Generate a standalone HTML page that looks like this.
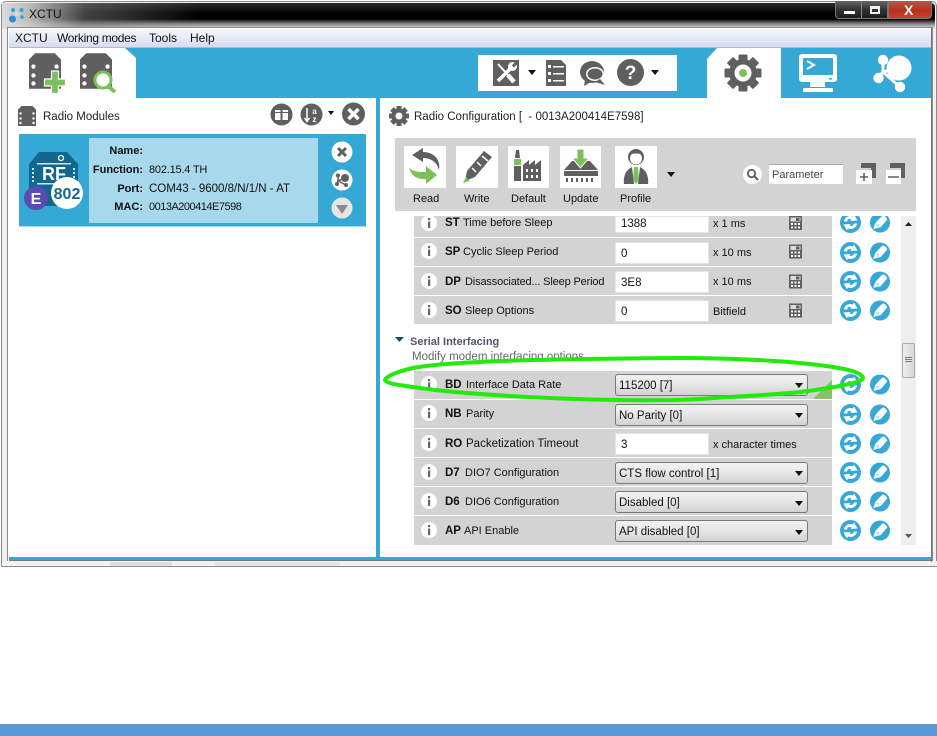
<!DOCTYPE html>
<html><head><meta charset="utf-8"><title>XCTU</title>
<style>
html,body{margin:0;padding:0;background:#fff}
#p{position:relative;width:937px;height:736px;overflow:hidden;background:#fff;font:11.5px "Liberation Sans",sans-serif;color:#111}
#p div,#p span,#p svg{position:absolute}
#p span{white-space:nowrap}
.row{left:414px;width:418px;height:28px;background:#d3d3d3}
#p span.t{line-height:14px;margin-top:1px}
#p span.m{margin-top:0}
#p span.l{font-size:11px}
.b{font-weight:bold}
.inp{left:615px;width:92px;height:20px;background:#fff;border:1px solid #e4e4e4;box-sizing:content-box;line-height:22px;text-indent:5px}
.sel{left:615px;width:191px;height:20px;border:1px solid #7a7a7a;border-radius:3px;background:linear-gradient(#f2f2f2,#e6e6e6 50%,#d2d2d2);line-height:22px;text-indent:3px}
.arr{width:0;height:0;border-left:4px solid transparent;border-right:4px solid transparent;border-top:5px solid #111}
</style></head><body>
<div id="p">
<svg width="0" height="0" style="left:0;top:0">
<defs>
<symbol id="mod" viewBox="0 0 36 40"><path d="M7 0H29L36 7V40H0V7Z" fill="#5f5f5f"/><g fill="#fff"><circle cx="5" cy="15" r="2.400"/><circle cx="5" cy="25" r="2.400"/><circle cx="5" cy="34" r="2.400"/><circle cx="31" cy="15" r="2.400"/><circle cx="31" cy="25" r="2.400"/><circle cx="31" cy="34" r="2.400"/></g></symbol>
<symbol id="ref" viewBox="0 0 21 21"><circle cx="10.500" cy="10.500" r="10.500" fill="#36a8d6"/><path d="M4 9.500C4.500 5 9 3 13 4.500L14 2.500 17.500 8.500 10.500 9 11.500 7.300C9 6.500 7.500 7.500 7 9.500ZM17 11.500C16.500 16 12 18 8 16.500L7 18.500 3.500 12.500 10.500 12 9.500 13.700C12 14.500 13.500 13.500 14 11.500Z" fill="#fff"/></symbol>
<symbol id="wr" viewBox="0 0 21 21"><circle cx="10.500" cy="10.500" r="10.500" fill="#36a8d6"/><path d="M13.500 3C15 3 18 5.500 18 7.500L11.500 15C10 16 7 16 3.500 17.500L5 12.500C6 10 10 6 13.500 3Z" fill="#fff"/><path d="M6.500 12.500L9 13 8 15" fill="none" stroke="#8fd0ea" stroke-width="1"/></symbol>
<symbol id="calc" viewBox="0 0 13 14"><path d="M0 0H13V14H0Z" fill="#5f5f5f"/><g fill="#fff"><rect x="1.500" y="1.500" width="10" height="4" fill="#ddd"/><rect x="7" y="2" width="3.500" height="3" fill="#5f5f5f"/><rect x="2" y="7" width="2" height="2"/><rect x="5.500" y="7" width="2" height="2"/><rect x="9" y="7" width="2" height="2"/><rect x="2" y="10.500" width="2" height="2"/><rect x="5.500" y="10.500" width="2" height="2"/><rect x="9" y="10.500" width="2" height="2"/></g></symbol>
<symbol id="info" viewBox="0 0 16 16"><circle cx="8" cy="8" r="8" fill="#fff"/><rect x="7" y="3" width="2.200" height="2.200" fill="#666"/><rect x="7" y="6.500" width="2.200" height="6.500" fill="#666"/></symbol>
</defs>
</svg>

<!-- window frame -->
<div style="left:1px;top:1px;width:936px;height:566px;background:#f0f0f0;border-radius:5px 5px 0 0;box-shadow:inset 0 0 0 1px #8a8a8a"></div>
<div style="left:2px;top:3px;width:933px;height:26px;background:linear-gradient(#2a2a2a,#000 40%,#000 62%,#777 78%,#eee 100%);border-radius:4px 4px 0 0"></div>
<div style="left:2px;top:3px;width:330px;height:26px;background:linear-gradient(90deg,rgba(225,225,225,.98) 0,rgba(205,205,205,.9) 8%,rgba(120,120,120,.55) 25%,rgba(0,0,0,0) 60%)"></div>
<svg style="left:9px;top:7px" width="16" height="16" viewBox="0 0 16 16"><circle cx="3.500" cy="12" r="3.500" fill="#2a8fd0"/><circle cx="12.500" cy="3" r="2" fill="#3aa0dc"/><circle cx="4" cy="3" r="2" fill="#3aa0dc"/><circle cx="13" cy="10" r="1.800" fill="#3aa0dc"/><circle cx="8" cy="7" r="2" fill="#ddd"/></svg>
<span class="t m" style="left:29px;top:7px;font-size:12px;color:#111">XCTU</span>
<!-- window controls -->
<div style="left:835px;top:1px;width:53px;height:18px;background:linear-gradient(#666,#333 50%,#1c1c1c);border:1px solid #777;border-top:0;border-radius:0 0 0 4px;box-sizing:border-box"></div>
<div style="left:888px;top:1px;width:44px;height:18px;background:linear-gradient(#b05a4a,#b8301c 55%,#c9432a);border:1px solid #777;border-top:0;border-radius:0 0 4px 0;box-sizing:border-box"></div>
<div style="left:861px;top:1px;width:1px;height:18px;background:#888"></div>
<div style="left:844px;top:11px;width:11px;height:3px;background:#fff"></div>
<div style="left:870px;top:6px;width:10px;height:8px;box-sizing:border-box;border:2px solid #eee;border-top-width:3px"></div>
<span class="b" style="left:904px;top:2px;font-size:14px;line-height:16px;color:#fff">X</span>

<!-- client -->
<div style="left:8px;top:28px;width:924px;height:533px;background:#fff;box-shadow:0 0 0 1px #8a8a8a"></div>
<div style="left:9px;top:29px;width:922px;height:18px;background:linear-gradient(#f5f7fc,#d6dcef);border-bottom:1px solid #b3b6cc"></div>
<span class="t m" style="left:15px;top:31px;font-size:12px">XCTU</span>
<span class="t m" style="left:57px;top:31px;font-size:12px;letter-spacing:-.3px">Working modes</span>
<span class="t m" style="left:149px;top:31px;font-size:12px">Tools</span>
<span class="t m" style="left:190px;top:31px;font-size:12px">Help</span>

<!-- blue toolbar -->
<div style="left:9px;top:48px;width:922px;height:50px;background:#36a8d6"></div>
<svg style="left:9px;top:48px" width="128" height="50"><path d="M0 0H116L127 10V50H0Z" fill="#fff"/></svg>
<svg style="left:29px;top:53px" width="37" height="41" viewBox="0 0 37 41"><use href="#mod" width="32" height="36"/><path d="M22.500 18H29.500V26H36.500V33H29.500V40.500H22.500V33H15.500V26H22.500Z" fill="#7cc05c" stroke="#fff" stroke-width="1.200"/></svg>
<svg style="left:80px;top:53px" width="38" height="40" viewBox="0 0 38 40"><use href="#mod" width="32" height="36"/><circle cx="23" cy="27" r="8" fill="#fff" stroke="#7cc05c" stroke-width="3"/><path d="M28 33L35 39" stroke="#7cc05c" stroke-width="4"/></svg>

<div style="left:478px;top:55px;width:199px;height:36px;background:#fff"></div>
<svg style="left:493px;top:60px" width="26" height="26" viewBox="0 0 26 26"><rect width="26" height="26" fill="#5f5f5f"/><path d="M5 4L15 15" stroke="#fff" stroke-width="2"/><path d="M15 15L21 22" stroke="#fff" stroke-width="4.500"/><path d="M18 8L5 21" stroke="#fff" stroke-width="3.500"/><circle cx="19.500" cy="6.500" r="4.500" fill="#fff"/><path d="M20 6.500L24 2" stroke="#5f5f5f" stroke-width="3"/></svg>
<div class="arr" style="left:528px;top:70px"></div>
<svg style="left:546px;top:60px" width="20" height="26" viewBox="0 0 20 26"><path d="M0 0H15L20 5V26H0Z" fill="#5f5f5f"/><g fill="#fff"><rect x="2" y="5" width="3" height="3"/><rect x="7" y="6" width="11" height="1.500"/><rect x="2" y="12" width="3" height="3"/><rect x="7" y="13" width="11" height="1.500"/><rect x="2" y="19" width="3" height="3"/><rect x="7" y="20" width="11" height="1.500"/></g></svg>
<svg style="left:580px;top:60px" width="27" height="27" viewBox="0 0 27 27"><ellipse cx="12" cy="12" rx="12" ry="11" fill="#5f5f5f"/><path d="M5 20L4 26 11 22Z" fill="#5f5f5f"/><ellipse cx="15" cy="14" rx="9" ry="7" fill="#fff"/><path d="M20 19L25 25 15 22Z" fill="#5f5f5f"/><ellipse cx="15" cy="14" rx="7.500" ry="5.500" fill="#5f5f5f"/></svg>
<svg style="left:617px;top:59px" width="27" height="27" viewBox="0 0 27 27"><circle cx="13.500" cy="13.500" r="13.500" fill="#5f5f5f"/><text x="13.500" y="20" text-anchor="middle" font-family="Liberation Sans" font-weight="bold" font-size="19" fill="#fff">?</text></svg>
<div class="arr" style="left:651px;top:70px"></div>

<svg style="left:707px;top:48px" width="74" height="50"><path d="M10 0H74V50H0V11Z" fill="#fff"/></svg>
<svg style="left:724px;top:54px" width="38" height="38" viewBox="-19 -19 38 38"><g fill="#5f5f5f"><rect x="-4.500" y="-18.500" width="9" height="37" rx="1"/><rect x="-4.500" y="-18.500" width="9" height="37" rx="1" transform="rotate(45)"/><rect x="-4.500" y="-18.500" width="9" height="37" rx="1" transform="rotate(90)"/><rect x="-4.500" y="-18.500" width="9" height="37" rx="1" transform="rotate(135)"/><circle r="14"/></g><circle r="8.500" fill="#fff"/><circle r="4" fill="#7cc05c"/></svg>
<svg style="left:799px;top:54px" width="38" height="38" viewBox="0 0 38 38"><rect x="0" y="0" width="38" height="28" rx="3" fill="#fff"/><rect x="4" y="4" width="30" height="17" fill="#36a8d6"/><path d="M8 7L15 11 8 15" fill="none" stroke="#fff" stroke-width="2"/><rect x="30" y="24" width="3" height="1.500" fill="#36a8d6"/><path d="M11 28H26V33H11Z" fill="#fff"/><rect x="4" y="34" width="30" height="4" fill="#fff"/></svg>
<svg style="left:873px;top:54px" width="40" height="39" viewBox="0 0 40 39"><path d="M10 6V18L5 24M10 18L26 14M10 18L27 33" stroke="#fff" stroke-width="3" fill="none"/><circle cx="10" cy="6" r="5.200" fill="#fff"/><circle cx="5.500" cy="24" r="5.200" fill="#fff"/><circle cx="26" cy="14" r="12.500" fill="#fff"/><circle cx="27" cy="33" r="5.200" fill="#fff"/></svg>

<!-- divider / bottom -->
<div style="left:376px;top:98px;width:4px;height:460px;background:#36a8d6"></div>
<div style="left:9px;top:557px;width:922px;height:3px;background:#36a8d6"></div>
<div style="left:9px;top:560px;width:922px;height:1px;background:#777"></div>
<div style="left:2px;top:561px;width:935px;height:5px;background:#f2f2f2"></div>
<div style="left:110px;top:562px;width:62px;height:4px;background:#dedede"></div>
<div style="left:215px;top:562px;width:125px;height:4px;background:#e6e6e6"></div>
<div style="left:1px;top:566px;width:936px;height:1px;background:#8c8c8c"></div>
<div style="left:931px;top:28px;width:1px;height:534px;background:#777"></div>
<div style="left:0;top:724px;width:937px;height:12px;background:#5b9bd5"></div>

<!-- left panel -->
<svg style="left:18px;top:106px" width="18" height="20"><use href="#mod" width="18" height="20"/></svg>
<span class="t" style="left:43px;top:109px;font-size:11.500px;color:#222">Radio Modules</span>
<svg style="left:270px;top:103px" width="23" height="23" viewBox="0 0 23 23"><circle cx="11.500" cy="11.500" r="11" fill="#5f5f5f"/><path d="M5 7H10.500V17H5ZM12.500 7H18V17H12.500Z" fill="#fff"/><path d="M5 9.500H10.500M12.500 9.500H18" stroke="#5f5f5f"/></svg>
<svg style="left:300px;top:103px" width="23" height="23" viewBox="0 0 23 23"><circle cx="11.500" cy="11.500" r="11" fill="#5f5f5f"/><path d="M7 5V18M4.500 15L7 18.500 9.500 15" stroke="#fff" stroke-width="1.500" fill="none"/><text x="14.500" y="11" text-anchor="middle" font-family="Liberation Sans" font-weight="bold" font-size="8" fill="#fff">a</text><text x="14.500" y="19" text-anchor="middle" font-family="Liberation Sans" font-weight="bold" font-size="8" fill="#fff">z</text></svg>
<div class="arr" style="left:328px;top:111px;border-left-width:3.500px;border-right-width:3.500px;border-top-width:4px"></div>
<svg style="left:342px;top:102px" width="23" height="24" viewBox="0 0 23 24"><circle cx="11.500" cy="12" r="11.500" fill="#5f5f5f"/><path d="M6.500 7L16.500 17M16.500 7L6.500 17" stroke="#fff" stroke-width="3.500"/></svg>

<div style="left:19px;top:134px;width:347px;height:92px;background:#36a8d6"></div>
<div style="left:19px;top:226px;width:347px;height:1px;background:#a8d8ec"></div>
<div style="left:89px;top:138px;width:229px;height:85px;background:#a8d8ec"></div>
<span class="t b l" style="right:794px;top:143px">Name:</span>
<span class="t b l" style="right:794px;top:162px">Function:</span>
<span class="t b l" style="right:794px;top:181px">Port:</span>
<span class="t b l" style="right:794px;top:199px">MAC:</span>
<span class="t l" style="left:149px;top:162px;letter-spacing:-.2px">802.15.4 TH</span>
<span class="t" style="left:149px;top:181px">COM43 - 9600/8/N/1/N - AT</span>
<span class="t l" style="left:149px;top:199px;letter-spacing:-.5px">0013A200414E7598</span>
<svg style="left:331px;top:141px" width="22" height="22" viewBox="0 0 22 22"><circle cx="11" cy="11" r="10.500" fill="#fff"/><path d="M7 7L15 15M15 7L7 15" stroke="#5f5f5f" stroke-width="3"/></svg>
<svg style="left:331px;top:169px" width="22" height="22" viewBox="0 0 22 22"><circle cx="11" cy="11" r="10.500" fill="#fff"/><path d="M7 7V12L6 15M7 12L14 9M7 12L15 16" stroke="#5f5f5f" stroke-width="1.500" fill="none"/><circle cx="7" cy="6.500" r="2" fill="#5f5f5f"/><circle cx="6" cy="15" r="2" fill="#5f5f5f"/><circle cx="14" cy="9" r="4" fill="#5f5f5f"/><circle cx="15" cy="16" r="2" fill="#5f5f5f"/></svg>
<svg style="left:331px;top:197px" width="22" height="22" viewBox="0 0 22 22"><circle cx="11" cy="11" r="10.500" fill="#e6e6e6"/><path d="M5 8H17L11 17Z" fill="#8c8c8c"/></svg>
<svg style="left:24px;top:150px" width="60" height="62" viewBox="0 0 60 62">
<path d="M15 2H43L54 14V56H5V14Z" fill="#10688f"/>
<circle cx="37" cy="8" r="2.500" fill="none" stroke="#fff" stroke-width="1.300"/>
<rect x="13" y="13" width="34" height="1.500" fill="#cfe6f0"/>
<text x="30" y="30" text-anchor="middle" font-family="Liberation Sans" font-weight="bold" font-size="18" fill="#fff">RF</text>
<rect x="13" y="33" width="20" height="1.500" fill="#cfe6f0"/>
<g fill="#cfe6f0"><rect x="8" y="18" width="2" height="2"/><rect x="8" y="22" width="2" height="2"/><rect x="8" y="26" width="2" height="2"/><rect x="8" y="30" width="2" height="2"/><rect x="49" y="18" width="2" height="2"/><rect x="49" y="22" width="2" height="2"/><rect x="49" y="26" width="2" height="2"/></g>
<circle cx="43" cy="43" r="16" fill="#fff"/>
<text x="43" y="49" text-anchor="middle" font-family="Liberation Sans" font-weight="bold" font-size="16" fill="#10688f">802</text>
<circle cx="12" cy="48" r="12" fill="#5a4bb0"/>
<text x="12" y="54" text-anchor="middle" font-family="Liberation Sans" font-weight="bold" font-size="16" fill="#fff">E</text>
</svg>

<!-- right panel -->
<svg style="left:389px;top:106px" width="20" height="20" viewBox="-10 -10 20 20"><g fill="#5f5f5f"><rect x="-2.500" y="-10" width="5" height="20"/><rect x="-2.500" y="-10" width="5" height="20" transform="rotate(45)"/><rect x="-2.500" y="-10" width="5" height="20" transform="rotate(90)"/><rect x="-2.500" y="-10" width="5" height="20" transform="rotate(135)"/><circle r="7.500"/></g><circle r="3.500" fill="#fff"/></svg>
<span class="t" style="left:414px;top:109px;font-size:11.500px;color:#222">Radio Configuration [ &nbsp;- 0013A200414E7598]</span>

<div style="left:395px;top:138px;width:521px;height:73px;background:#d3d3d3"></div>
<div style="left:404px;top:146px;width:42px;height:42px;background:#fff"></div>
<div style="left:456px;top:146px;width:42px;height:42px;background:#fff"></div>
<div style="left:508px;top:146px;width:41px;height:42px;background:#fff"></div>
<div style="left:560px;top:146px;width:41px;height:42px;background:#fff"></div>
<div style="left:615px;top:146px;width:42px;height:42px;background:#fff"></div>
<svg style="left:404px;top:146px" width="42" height="42" viewBox="0 0 42 42"><path d="M19 2L8 9 19 16V12C27 12 33 16 35 24 37 14 30 6 19 6Z" fill="#5f5f5f"/><path d="M22 20L33 29 22 38V33C13 34 7 29 5 22 10 26 15 26 22 26Z" fill="#7cc05c"/></svg>
<svg style="left:456px;top:146px" width="42" height="42" viewBox="0 0 42 42"><path d="M28 5L36 11 19 31 9 35 11 25Z" fill="#5f5f5f"/><path d="M26 10L32 15M21 16L25 20M16 22L20 26" stroke="#fff" stroke-width="1.500"/><path d="M7 37L10 31 14 35Z" fill="#7cc05c"/></svg>
<svg style="left:508px;top:146px" width="41" height="42" viewBox="0 0 41 42"><path d="M8 4H11L12 12H7Z" fill="#5f5f5f"/><rect x="6" y="13" width="7" height="6" fill="#7cc05c"/><rect x="6" y="20" width="7" height="15" fill="#5f5f5f"/><path d="M15 35V19L21 14V19L27 14V19L33 14V35Z" fill="#5f5f5f"/><g fill="#fff"><rect x="18" y="23" width="2" height="3"/><rect x="23" y="23" width="2" height="3"/><rect x="28" y="23" width="2" height="3"/><rect x="18" y="29" width="2" height="3"/><rect x="23" y="29" width="2" height="3"/><rect x="28" y="29" width="2" height="3"/></g></svg>
<svg style="left:560px;top:146px" width="41" height="42" viewBox="0 0 41 42"><path d="M4 24L12 15H30L38 24Z" fill="#5f5f5f"/><rect x="4" y="25" width="34" height="5" fill="#5f5f5f"/><path d="M17 3H24V12H29L20.500 22 12 12H17Z" fill="#7cc05c" stroke="#fff"/><g fill="#5f5f5f"><rect x="6" y="32" width="2" height="4"/><rect x="11" y="32" width="2" height="4"/><rect x="16" y="32" width="2" height="4"/><rect x="21" y="32" width="2" height="4"/><rect x="26" y="32" width="2" height="4"/><rect x="31" y="32" width="2" height="4"/></g></svg>
<svg style="left:615px;top:146px" width="42" height="42" viewBox="0 0 42 42"><circle cx="21" cy="11" r="8" fill="#5f5f5f"/><ellipse cx="21" cy="12.500" rx="6" ry="6" fill="#fff"/><path d="M13 9C15 5 27 5 29 9 25 7 17 7 13 9Z" fill="#5f5f5f"/><path d="M9 38C8 30 11 24 17 21L19 38ZM33 38C34 30 31 24 25 21L23 38Z" fill="#5f5f5f"/><path d="M19 21H23L24 34 21 38 18 34Z" fill="#7cc05c"/></svg>
<span class="t l" style="left:413px;top:191px">Read</span>
<span class="t l" style="left:464px;top:191px">Write</span>
<span class="t l" style="left:511px;top:191px">Default</span>
<span class="t l" style="left:563px;top:191px">Update</span>
<span class="t l" style="left:620px;top:191px">Profile</span>
<div class="arr" style="left:667px;top:172px"></div>
<svg style="left:743px;top:165px" width="19" height="19" viewBox="0 0 19 19"><circle cx="9.500" cy="9.500" r="9.500" fill="#fff"/><circle cx="8.500" cy="8.500" r="3.700" fill="none" stroke="#5f5f5f" stroke-width="1.800"/><path d="M11 11L15 15" stroke="#5f5f5f" stroke-width="2"/></svg>
<div style="left:769px;top:164px;width:74px;height:20px;background:#fff;box-shadow:inset 0 1px 0 #aaa"></div>
<span class="t l" style="left:772px;top:167px;color:#444">Parameter</span>
<svg style="left:856px;top:163px" width="21" height="21" viewBox="0 0 21 21"><path d="M5 0H20V15H15V5H5Z" fill="#5f5f5f"/><rect x="0" y="7" width="16" height="14" fill="#fff"/><path d="M4 14H12M8 10V18" stroke="#5f5f5f" stroke-width="1.500"/></svg>
<svg style="left:886px;top:163px" width="20" height="21" viewBox="0 0 20 21"><path d="M4 0H19V15H15V5H4Z" fill="#5f5f5f"/><rect x="0" y="7" width="15" height="14" fill="#fff"/><path d="M2 14H13" stroke="#5f5f5f" stroke-width="1.500"/></svg>

<!-- rows clip top -->
<div class="row" style="top:216px;height:21px"></div>
<div class="row" style="top:238px"></div>
<div class="row" style="top:267px"></div>
<div class="row" style="top:296px"></div>
<div class="row" style="top:371px"></div>
<div class="row" style="top:400px"></div>
<div class="row" style="top:429px"></div>
<div class="row" style="top:458px"></div>
<div class="row" style="top:487px"></div>
<div class="row" style="top:516px;height:29px"></div>
<svg style="left:813px;top:380px" width="19" height="19"><path d="M19 0V19H0Z" fill="#8cc06a"/></svg>

<svg style="left:421px;top:216px" width="16" height="15" viewBox="0 1 16 15"><use href="#info" width="16" height="16"/></svg>
<svg style="left:421px;top:243px" width="16" height="16"><use href="#info" width="16" height="16"/></svg>
<svg style="left:421px;top:273px" width="16" height="16"><use href="#info" width="16" height="16"/></svg>
<svg style="left:421px;top:302px" width="16" height="16"><use href="#info" width="16" height="16"/></svg>
<svg style="left:421px;top:376px" width="16" height="16"><use href="#info" width="16" height="16"/></svg>
<svg style="left:421px;top:405px" width="16" height="16"><use href="#info" width="16" height="16"/></svg>
<svg style="left:421px;top:435px" width="16" height="16"><use href="#info" width="16" height="16"/></svg>
<svg style="left:421px;top:464px" width="16" height="16"><use href="#info" width="16" height="16"/></svg>
<svg style="left:421px;top:493px" width="16" height="16"><use href="#info" width="16" height="16"/></svg>
<svg style="left:421px;top:522px" width="16" height="16"><use href="#info" width="16" height="16"/></svg>

<span class="t b" style="left:445px;top:215px">ST</span><span class="t l" style="left:463px;top:215px">Time before Sleep</span>
<span class="t b" style="left:445px;top:244px">SP</span><span class="t l" style="left:463px;top:244px">Cyclic Sleep Period</span>
<span class="t b" style="left:445px;top:274px">DP</span><span class="t l" style="left:465px;top:274px;letter-spacing:-.15px">Disassociated... Sleep Period</span>
<span class="t b" style="left:445px;top:303px">SO</span><span class="t l" style="left:465px;top:303px">Sleep Options</span>
<span class="t b" style="left:445px;top:377px">BD</span><span class="t l" style="left:466px;top:377px">Interface Data Rate</span>
<span class="t b" style="left:445px;top:406px">NB</span><span class="t l" style="left:466px;top:406px">Parity</span>
<span class="t b" style="left:445px;top:436px">RO</span><span class="t" style="left:466px;top:436px">Packetization Timeout</span>
<span class="t b" style="left:445px;top:465px">D7</span><span class="t l" style="left:465px;top:465px">DIO7 Configuration</span>
<span class="t b" style="left:445px;top:494px">D6</span><span class="t l" style="left:465px;top:494px">DIO6 Configuration</span>
<span class="t b" style="left:445px;top:523px">AP</span><span class="t l" style="left:464px;top:523px">API Enable</span>

<div class="inp" style="top:216px;height:15px;line-height:15px">1388</div>
<div class="inp" style="top:242px">0</div>
<div class="inp" style="top:271px">3E8</div>
<div class="inp" style="top:300px">0</div>
<div class="inp" style="top:433px">3</div>
<span class="t l" style="left:713px;top:216px">x 1 ms</span>
<span class="t l" style="left:713px;top:245px">x 10 ms</span>
<span class="t l" style="left:713px;top:274px">x 10 ms</span>
<span class="t l" style="left:713px;top:304px">Bitfield</span>
<span class="t l" style="left:713px;top:437px">x character times</span>

<div class="sel" style="top:374px">115200 [7]</div><div class="arr" style="left:795px;top:383px"></div>
<div class="sel" style="top:404px">No Parity [0]</div><div class="arr" style="left:795px;top:413px"></div>
<div class="sel" style="top:462px">CTS flow control [1]</div><div class="arr" style="left:795px;top:471px"></div>
<div class="sel" style="top:491px">Disabled [0]</div><div class="arr" style="left:795px;top:501px"></div>
<div class="sel" style="top:520px">API disabled [0]</div><div class="arr" style="left:795px;top:530px"></div>

<svg style="left:789px;top:216px" width="13" height="14"><use href="#calc" width="13" height="14"/></svg>
<svg style="left:789px;top:244px" width="13" height="15"><use href="#calc" width="13" height="15"/></svg>
<svg style="left:789px;top:274px" width="13" height="15"><use href="#calc" width="13" height="15"/></svg>
<svg style="left:789px;top:303px" width="13" height="15"><use href="#calc" width="13" height="15"/></svg>

<svg style="left:840px;top:216px" width="21" height="17" viewBox="0 4 21 17"><use href="#ref" width="21" height="21"/></svg>
<svg style="left:870px;top:216px" width="20" height="17" viewBox="0 4 21 17"><use href="#wr" width="21" height="21"/></svg>
<svg style="left:840px;top:242px" width="21" height="21"><use href="#ref" width="21" height="21"/></svg>
<svg style="left:870px;top:242px" width="20" height="21"><use href="#wr" width="20" height="21"/></svg>
<svg style="left:840px;top:271px" width="21" height="21"><use href="#ref" width="21" height="21"/></svg>
<svg style="left:870px;top:271px" width="20" height="21"><use href="#wr" width="20" height="21"/></svg>
<svg style="left:840px;top:300px" width="21" height="21"><use href="#ref" width="21" height="21"/></svg>
<svg style="left:870px;top:300px" width="20" height="21"><use href="#wr" width="20" height="21"/></svg>
<svg style="left:840px;top:374px" width="21" height="21"><use href="#ref" width="21" height="21"/></svg>
<svg style="left:870px;top:374px" width="20" height="21"><use href="#wr" width="20" height="21"/></svg>
<svg style="left:840px;top:404px" width="21" height="21"><use href="#ref" width="21" height="21"/></svg>
<svg style="left:870px;top:404px" width="20" height="21"><use href="#wr" width="20" height="21"/></svg>
<svg style="left:840px;top:433px" width="21" height="21"><use href="#ref" width="21" height="21"/></svg>
<svg style="left:870px;top:433px" width="20" height="21"><use href="#wr" width="20" height="21"/></svg>
<svg style="left:840px;top:462px" width="21" height="21"><use href="#ref" width="21" height="21"/></svg>
<svg style="left:870px;top:462px" width="20" height="21"><use href="#wr" width="20" height="21"/></svg>
<svg style="left:840px;top:491px" width="21" height="21"><use href="#ref" width="21" height="21"/></svg>
<svg style="left:870px;top:491px" width="20" height="21"><use href="#wr" width="20" height="21"/></svg>
<svg style="left:840px;top:520px" width="21" height="21"><use href="#ref" width="21" height="21"/></svg>
<svg style="left:870px;top:520px" width="20" height="21"><use href="#wr" width="20" height="21"/></svg>

<!-- section -->
<svg style="left:395px;top:337px" width="9" height="6"><path d="M0 0H9L4.500 5Z" fill="#1f4a6e"/></svg>
<span class="t b" style="left:410px;top:334px;color:#4d5a66;font-size:11px">Serial Interfacing</span>
<span class="t" style="left:412px;top:349px;color:#666">Modify modem interfacing options</span>
<div style="left:480px;top:360px;width:110px;height:4px;background:#fff"></div>

<!-- scrollbar -->
<div style="left:901px;top:216px;width:15px;height:329px;background:#eeeeee"></div>
<div style="left:902px;top:343px;width:13px;height:35px;background:linear-gradient(90deg,#eee,#d6d6d6);border:1px solid #aaa;border-radius:2px;box-sizing:border-box"></div>
<div style="left:905px;top:357px;width:7px;height:6px;background:repeating-linear-gradient(#777 0,#777 1px,#e6e6e6 1px,#e6e6e6 2px)"></div>
<svg style="left:905px;top:222px" width="8" height="5"><path d="M0 4H7L3.500 0Z" fill="#222"/></svg>
<svg style="left:905px;top:534px" width="8" height="5"><path d="M0 0H7L3.500 4Z" fill="#555"/></svg>

<!-- green ellipse -->
<svg style="left:0;top:0" width="937" height="736"><path d="M385 380C387 375 400 371 413 368C450 361 540 359 680 358C720 358 770 360 800 363C830 366 862 370 863 378C863 382 840 387 800 392C780 394 750 396 730 397C700 399 680 401 620 400C540 399 450 393 413 387C400 385 387 384 385 380Z" fill="none" stroke="#22ea0a" stroke-width="4"/></svg>
</div>
</body></html>
